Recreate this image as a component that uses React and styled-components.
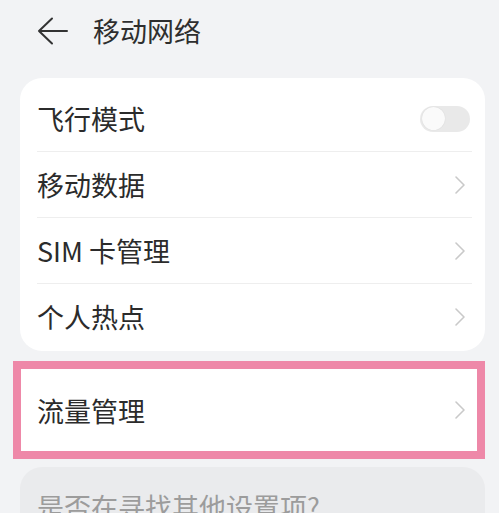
import styled, { createGlobalStyle } from 'styled-components';

const GlobalStyle = createGlobalStyle`
    html, body {
        margin: 0;
        padding: 0;
        background: #f2f3f5;
        font-family: "Noto Sans CJK SC", "Noto Sans", sans-serif;
        color: #2b2b2b;
    }
`

const Chevron = () => (
    <svg width="12" height="20" viewBox="0 0 12 20" fill="none">
        <path d="M2 2 L10 10 L2 18" stroke="#c9c9c9" strokeWidth="1.6" strokeLinecap="round" strokeLinejoin="round" />
    </svg>
)

const BackArrow = () => (
    <svg width="32" height="28" viewBox="0 0 32 28" fill="none">
        <path d="M30 14 H2 M15 1.5 L2 14 L15 26.5" stroke="#333" strokeWidth="2" strokeLinecap="round" strokeLinejoin="round" />
    </svg>
)

const items = [
    { label: '飞行模式', toggle: true },
    { label: '移动数据' },
    { label: 'SIM 卡管理' },
    { label: '个人热点' },
]

const App = () => {
    return (
        <Page>
            <GlobalStyle />
            <Header>
                <BackButton><BackArrow /></BackButton>
                <Title>移动网络</Title>
            </Header>
            <Card>
                {items.map((item, i) => (
                    <Row key={item.label} $divided={i > 0}>
                        <Label>{item.label}</Label>
                        {item.toggle ? (
                            <Switch><Knob /></Switch>
                        ) : (
                            <Chevron />
                        )}
                    </Row>
                ))}
            </Card>
            <Highlight>
                <HighlightRow>
                    <Label>流量管理</Label>
                    <Chevron />
                </HighlightRow>
            </Highlight>
            <SuggestCard>
                <SuggestText>是否在寻找其他设置项?</SuggestText>
            </SuggestCard>
        </Page>
    )
}

export default App;


//styled-components

const Page = styled.div`
    width: 499px;
    height: 513px;
    overflow: hidden;
    background: #f2f3f5;
`

const Header = styled.div`
    height: 60px;
    display: flex;
    align-items: center;
    padding-left: 37px;
    gap: 24px;
`

const BackButton = styled.div`
    display: flex;
    align-items: center;
    margin-top: 1px;
`

const Title = styled.div`
    font-size: 27px;
    line-height: 1;
    color: #2e2e2e;
`

const Card = styled.div`
    margin: 18px 14px 0 20px;
    background: #fff;
    border-radius: 22px;
    padding: 7px 13px 2px 17px;
`

const Row = styled.div`
    height: 65px;
    display: flex;
    align-items: center;
    justify-content: space-between;
    padding-right: 6px;
    border-top: ${({ $divided }) => $divided ? '1px solid #eeeeee' : '1px solid transparent'};
`

const Label = styled.div`
    font-size: 27px;
    line-height: 1;
    color: #2b2b2b;
`

const Switch = styled.div`
    width: 50px;
    height: 26px;
    border-radius: 13px;
    background: #e9e9e9;
    display: flex;
    align-items: center;
    padding: 0 2px;
    box-sizing: border-box;
    margin-right: -4px;
`

const Knob = styled.div`
    width: 23px;
    height: 23px;
    border-radius: 50%;
    background: #fafafa;
    box-shadow: 0 0 1px rgba(0, 0, 0, 0.15);
`

const Highlight = styled.div`
    margin: 10px 14px 0 13px;
    border: 8px solid #ee88a8;
    background: #fff;
`

const HighlightRow = styled.div`
    height: 82px;
    display: flex;
    align-items: center;
    justify-content: space-between;
    padding: 0 11px 0 16px;
`

const SuggestCard = styled.div`
    margin: 8px 14px 0 20px;
    background: #eaebed;
    border-radius: 22px;
    padding: 24px 17px;
    height: 120px;
`

const SuggestText = styled.div`
    font-size: 27px;
    line-height: 1.2;
    color: #9c9c9c;
`
